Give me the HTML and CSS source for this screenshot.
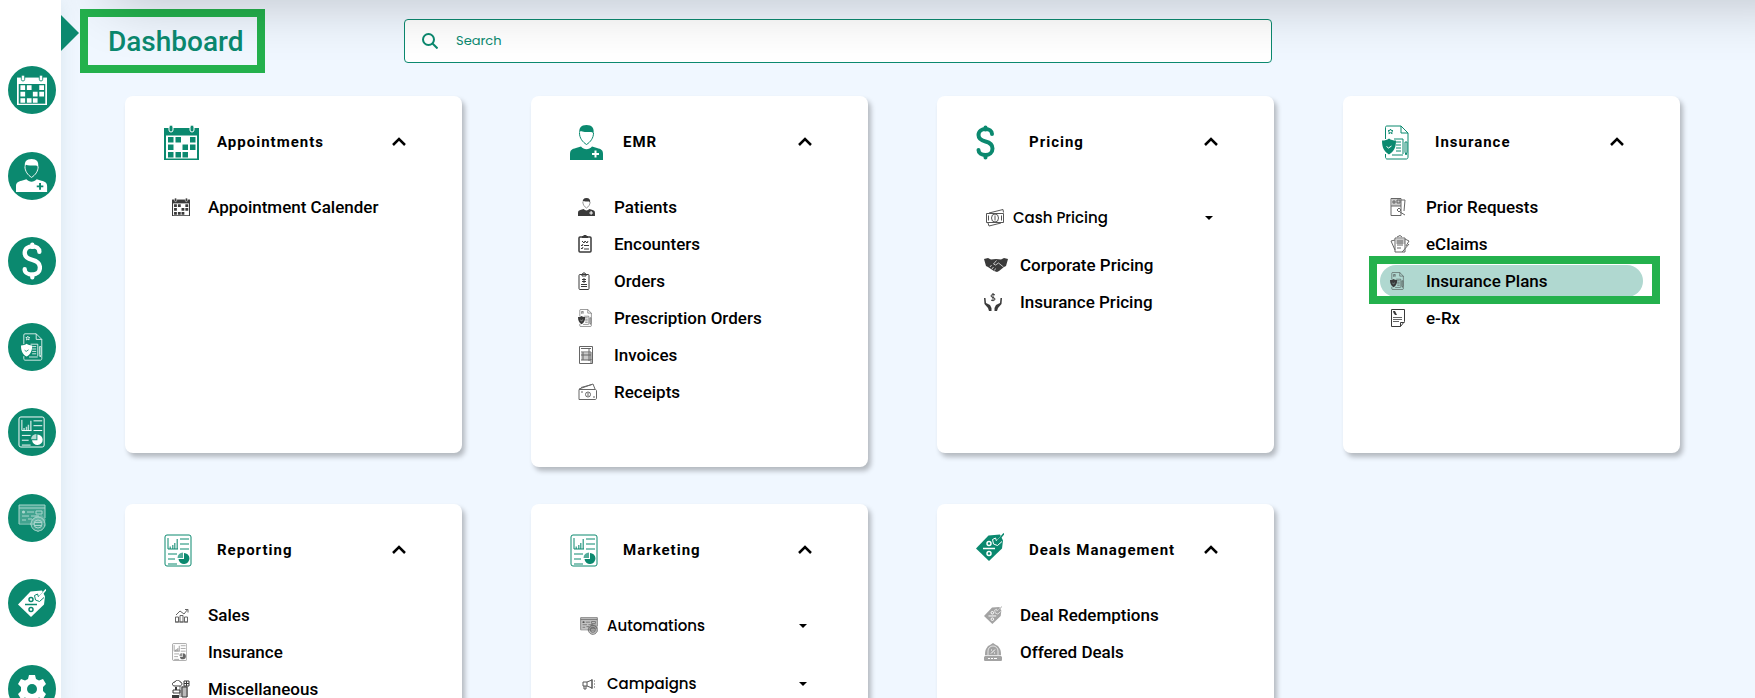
FILE: index.html
```
<!DOCTYPE html>
<html lang="en">
<head>
  <meta charset="UTF-8">
  <title>Dashboard</title>
  <link rel="stylesheet" href="styles.css">
</head>
<body>

  <!-- Icon shapes, reused below -->
  <svg class="icon-defs" aria-hidden="true">
    <defs>
      <g id="calendar">
        <path class="f" d="M0 3h35v32H0z"/>
        <path class="cut" d="M2 10.500h31V33.500H2z"/>
        <path class="f" d="M4 12h5.500v5.500H4zM11.500 12H17v5.500h-5.500zM26 12h5.500v5.500H26zM4 19.500h5.500V25H4zM18.500 19.500H24V25h-5.500zM26 19.500h5.500V25H26zM4 27h5.500v5.500H4zM11.500 27H17v5.500h-5.500zM18.500 27H24v5.500h-5.500z"/>
        <rect class="f ring" x="5" y="0" width="4" height="7" rx="2"/>
        <rect class="f ring" x="26" y="0" width="4" height="7" rx="2"/>
      </g>
      <g id="doctor">
        <path class="f" d="M9.500 9C8.500 3 11 0 16.500 0S24.500 3 23.500 9c-1-2-2-2-3-2-4 0-8 0-10-1z"/>
        <path class="s" d="M9.500 8c0 5 3 9 7 11.500C20.500 17 23.500 13 23.500 8"/>
        <path class="f" d="M0 35v-6c0-4 2-5 6-6l5-1.500c3 3.500 8 3.500 11 0l5 1.500c4 1 6 2 6 6v6z"/>
        <path class="cut" d="M24.500 25.500h2V28H29v2h-2.500v2.500h-2V30H22v-2h2.500z"/>
      </g>
      <g id="dollar">
        <path class="s heavy" d="M16 9c0-3-3-5-6.500-5S2.500 6 2.500 10s3 5.500 7 6.500 7 3 7 7-3 6.500-7 6.500-7-2-7-5"/>
        <path class="s heavy" d="M9.500 2.500v2M9.500 30v2.500"/>
      </g>
      <g id="policy">
        <path class="s" d="M3.500 14V2.500c0-1 .5-1.500 1.500-1.500h14l7 7v24c0 1-.5 2-1.500 2H5c-1 0-1.500-1-1.500-2v-3M19 1v7h7"/>
        <path class="s" d="M8.500 4l.7 1.500 1.800.2-1.300 1.200.4 1.800-1.600-1-1.600 1 .4-1.800L6 5.700l1.800-.2z"/>
        <path class="s" d="M12 14h9v15M14 17h5M14 20h5M14 23h5M14 26h5M10 30h11M23 17v10l1 3 1-3V17z"/>
        <path class="f" d="M7 13.500c2 1.500 4 2 7 2 0 7-2 11-7 14-5-3-7-7-7-14 3 0 5-.5 7-2z"/>
        <path class="cs" d="M4.500 21.500l2 1.500 3-2"/>
      </g>
      <g id="report">
        <rect class="s" x="1" y="1" width="26" height="31" rx="2"/>
        <path class="s" d="M4 4v11h10"/>
        <path class="f shade" d="M5.500 12.500h1.500V15H5.500zM8 11h1.500v4H8zM10 9h1.500v6H10zM12.500 5h1.500v10h-1.500z"/>
        <path class="s" d="M16 5h9M16 10h9M16 15h9M4 20h9M4 25h7M4 30h9"/>
        <path class="f" d="M20 19a5.500 5.500 0 11-5.500 6H20z"/>
        <path class="f shade" d="M19 18.500V24h-5.500a5.500 5.500 0 015.500-5.500z"/>
      </g>
      <g id="automation">
        <path class="tint" d="M1 1h26v18H1z"/>
        <path class="s" d="M17 20H1V1h26v13M1 4h26"/>
        <path class="s" d="M4 8h3M9 8h7M18 7h6v3h-6zM4 12h7M13 12h6M4 16h4M10 15h4"/>
        <circle class="f" cx="5.500" cy="8" r="1.500"/>
        <path class="tint" d="M18 11l3 1 3-1 1 2 3 2-1 4 1 3-3 2-1 3-3-1-4 1-2-3-2-2 1-3-1-3 3-2z"/>
        <circle class="s" cx="20" cy="20" r="7"/>
        <circle class="s" cx="20" cy="20" r="4"/>
        <path class="s" d="M17 18.500h6M17 21.500h6M20 11v2M20 27v1M12 20h1"/>
      </g>
      <g id="tag">
        <path class="f" d="M0 15.500L12.500 2.500 24 1.500l3 6-1 8L13 28z"/>
        <path class="cs bold" d="M7 15.500h12"/>
        <circle class="cs bold" cx="13" cy="10.500" r="2"/>
        <circle class="cs bold" cx="13" cy="20.500" r="2"/>
        <path class="cs" d="M16.500 6.500l1 4.500 4 1.500L26 8.500M16.500 6.500L19.500 5l1 3L26.500 1.500"/>
        <path class="s bold" d="M20.500 9L28 .5"/>
      </g>
      <g id="gear">
        <path class="f" d="M11 0h6l1 4 3 1.500L25 4l3 5-3 3v4l3 3-3 5-4-1.500L18 24l-1 4h-6l-1-4-3-1.500L3 24l-3-5 3-3v-4L0 9l3-5 4 1.500L10 4z"/>
        <circle class="cut" cx="14" cy="14" r="5"/>
      </g>
      <g id="encounter">
        <rect class="s bold" x="1" y="2" width="12" height="15" rx="1"/>
        <path class="f" d="M4 1h1l1-1h2l1 1h1v2H4z"/>
        <path class="s" d="M4 6l2 2 1-2 2 2 1-2M3 10l1 1 1-2M6 10.500h5M3 13l1 1 1-2M6 14h5"/>
      </g>
      <g id="order">
        <rect class="s" x="1" y="2.500" width="10" height="15" rx="1"/>
        <path class="s" d="M4 3l1-2h2l1 2v1H4zM6 6v5M4 7.500h4M4 9.500h4M3 12.500h6M3 14.500h6"/>
      </g>
      <g id="invoice">
        <path class="s" d="M1.500.5h13v17h-13zM3 2.500h10M3 6h10v8H3M3 9h10M5 6v8M11 3v12M13 13v4"/>
        <path class="tint" d="M3 7h10v7H3z"/>
      </g>
      <g id="receipt">
        <path class="s" d="M1 6.500h16c1 0 1.500.5 1.500 1V15c0 1-.5 1.500-1.500 1.500H1zM1 6l14-5 2 5M3 4.500l11-3"/>
        <circle class="s" cx="10" cy="11.500" r="2.500"/>
        <path class="s" d="M10 10v3M3 9h2M15 14h2"/>
      </g>
      <g id="cash">
        <path class="s" d="M.5 4.500h17v9H.5zM3 4L17 .5l.5 3M2 14l1 3 12-3"/>
        <ellipse class="s" cx="9" cy="9" rx="3.500" ry="4"/>
        <path class="s" d="M9 6.500v5M2.500 6.500v5M15.500 6.500v5"/>
      </g>
      <g id="handshake">
        <path class="f" d="M0 1l4-1 3 1.500L12 1l5 .5L20 0l4 1-2 7-2 1-5 4-2 1-3-1L4 9 2 8z"/>
        <path class="cs thin" d="M12.500 2.500L9.500 6l2 1 3-2 5 4M6 9l1.500-2M8 11l1.500-2M10.500 12.500l1-2"/>
      </g>
      <g id="hands">
        <path class="f" d="M0 5h1.500L2 10l4 2 1.500 3v3H5L4 15 .5 11zM18 5h-1.500L16 10l-4 2-1.500 3v3H13l1-3 3.500-4z"/>
        <path class="s" d="M11 2c-1-1-4-1-4 1s4 1 4 3-3 2-4 1M9 0v8"/>
      </g>
      <g id="prior">
        <path class="s" d="M1 .5h10v17H1zM11 2h4l-1 11M1 8h10M3 3h2v2H3zM7 2h3v3H7zM7 12l2-2 2 2-2 2zM10 14l5 3"/>
        <path class="tint" d="M2 1h9v7H2z"/>
      </g>
      <g id="claims">
        <path class="s" d="M5 3h10v14H5zM5 5L1 6l4 9M15 4l4 2-3 5M7 2l3-1.500L12 2M7 6h6M7 8h6M7 10h6M7 13h4M19 9l-6 7-1 1"/>
        <path class="tint" d="M6 4h9v5H6z"/>
      </g>
      <g id="rx">
        <path class="s" d="M.5.5h13v12l-4 5h-9zM9.500 17.500v-4h4"/>
        <path class="f" d="M2 2h2l2 4H4L2.500 4z"/>
        <path class="s soft" d="M2 8.500h9M2 10.500h9M2 12.500h6"/>
      </g>
      <g id="sales">
        <path class="s" d="M.5 13V8h3v5zM5 13V6.500h3V13zM9.500 13V8h3v5zM0 13h13M1 6l4-4 4 3 4-5M10 .5h3v3"/>
      </g>
      <g id="misc">
        <path class="s" d="M3 6C-1 6 0 2 3 2c1-3 5-2 5 0 3 0 2 4 0 4zM10 7h5v10h-5zM12 1h5v5h-5zM14.500 1v5M12 3.500h5M1 10h7v3H1z"/>
        <path class="tint" d="M7 6h9v11H7z"/>
        <path class="f" d="M0 15h7v3H0zM3 7h2v3H3z"/>
      </g>
      <g id="campaign">
        <path class="s" d="M1 4h4l5-2v8L5 8H1zM2 8v3h2V8M5 4v4M10 1v10M12 3h1M12 6h1M12 9h1"/>
      </g>
      <g id="offer">
        <path class="f" d="M1 18c-1 0-1-1-1-2v-2l1-1c0-3 0-5 1-7l2-3 2-1 3-2 3 2 2 1 2 3c1 2 1 4 1 7l1 1v2c0 1 0 2-1 2z"/>
        <path class="cs thin" d="M4 12V8a5 5 0 0110 0v4M1 12.500h16"/>
        <path class="cs" d="M7 10.500l4-4M7 7h1M10 10h1M4 15.500h2M7 15.500h2M10 15.500h3"/>
      </g>
    </defs>
  </svg>

  <nav class="sidebar" aria-label="Main">
    <a class="nav-link" href="#appointments" aria-label="Appointments"><svg class="nav-calendar" viewBox="0 0 35 35"><use href="#calendar"/></svg></a>
    <a class="nav-link" href="#emr" aria-label="EMR"><svg class="nav-doctor" viewBox="0 0 33 35"><use href="#doctor"/></svg></a>
    <a class="nav-link" href="#pricing" aria-label="Pricing"><svg class="nav-dollar" viewBox="0 0 19 35"><use href="#dollar"/></svg></a>
    <a class="nav-link" href="#insurance" aria-label="Insurance"><svg viewBox="0 0 27 35"><use href="#policy"/></svg></a>
    <a class="nav-link" href="#reporting" aria-label="Reporting"><svg class="nav-report" viewBox="0 0 28 33"><use href="#report"/></svg></a>
    <a class="nav-link" href="#marketing" aria-label="Marketing"><svg class="nav-faint" viewBox="0 0 28 28"><use href="#automation"/></svg></a>
    <a class="nav-link" href="#deals" aria-label="Deals Management"><svg viewBox="0 0 28 28"><use href="#tag"/></svg></a>
    <a class="nav-link" href="#settings" aria-label="Settings"><svg viewBox="0 0 28 28"><use href="#gear"/></svg></a>
    <button class="sidebar-toggle" aria-label="Expand menu"></button>
  </nav>

  <div class="page">
    <header class="topbar">
      <h1 class="page-title">Dashboard</h1>
      <label class="search">
        <svg viewBox="0 0 16 16" aria-hidden="true"><circle cx="6.500" cy="6.500" r="5.500"/><path d="M10.500 10.500L15.500 15.500"/></svg>
        <input type="search" placeholder="Search" aria-label="Search">
      </label>
    </header>

    <main class="cards">
      <section class="card" id="appointments">
        <h2><button class="card-header">
          <span class="card-icon"><svg viewBox="0 0 35 35"><use href="#calendar"/></svg></span>
          <span class="card-title">Appointments</span>
          <svg class="chevron" viewBox="0 0 14 9"><path d="M1 8l6-6 6 6"/></svg>
        </button></h2>
        <ul class="menu">
          <li><a class="menu-item" href="#"><span class="menu-icon"><svg viewBox="0 0 35 35"><use href="#calendar"/></svg></span>Appointment Calender</a></li>
        </ul>
      </section>

      <section class="card" id="emr">
        <h2><button class="card-header">
          <span class="card-icon"><svg viewBox="0 0 33 35"><use href="#doctor"/></svg></span>
          <span class="card-title">EMR</span>
          <svg class="chevron" viewBox="0 0 14 9"><path d="M1 8l6-6 6 6"/></svg>
        </button></h2>
        <ul class="menu">
          <li><a class="menu-item" href="#"><span class="menu-icon"><svg viewBox="0 0 33 35"><use href="#doctor"/></svg></span>Patients</a></li>
          <li><a class="menu-item" href="#"><span class="menu-icon"><svg viewBox="0 0 14 18"><use href="#encounter"/></svg></span>Encounters</a></li>
          <li><a class="menu-item" href="#"><span class="menu-icon"><svg viewBox="0 0 12 18"><use href="#order"/></svg></span>Orders</a></li>
          <li><a class="menu-item" href="#"><span class="menu-icon"><svg viewBox="0 0 27 35"><use href="#policy"/></svg></span>Prescription Orders</a></li>
          <li><a class="menu-item" href="#"><span class="menu-icon soft"><svg viewBox="0 0 16 18"><use href="#invoice"/></svg></span>Invoices</a></li>
          <li><a class="menu-item" href="#"><span class="menu-icon soft"><svg viewBox="0 0 19 18"><use href="#receipt"/></svg></span>Receipts</a></li>
        </ul>
      </section>

      <section class="card" id="pricing">
        <h2><button class="card-header">
          <span class="card-icon"><svg viewBox="0 0 19 35"><use href="#dollar"/></svg></span>
          <span class="card-title">Pricing</span>
          <svg class="chevron" viewBox="0 0 14 9"><path d="M1 8l6-6 6 6"/></svg>
        </button></h2>
        <ul class="menu">
          <li><button class="submenu"><span class="submenu-icon"><svg viewBox="0 0 18 18"><use href="#cash"/></svg></span>Cash Pricing<span class="caret"></span></button></li>
          <li><a class="menu-item" href="#"><span class="menu-icon"><svg class="icon-wide" viewBox="0 0 24 14"><use href="#handshake"/></svg></span>Corporate Pricing</a></li>
          <li><a class="menu-item" href="#"><span class="menu-icon"><svg viewBox="0 0 18 18"><use href="#hands"/></svg></span>Insurance Pricing</a></li>
        </ul>
      </section>

      <section class="card" id="insurance">
        <h2><button class="card-header">
          <span class="card-icon"><svg viewBox="0 0 27 35"><use href="#policy"/></svg></span>
          <span class="card-title">Insurance</span>
          <svg class="chevron" viewBox="0 0 14 9"><path d="M1 8l6-6 6 6"/></svg>
        </button></h2>
        <ul class="menu">
          <li><a class="menu-item" href="#"><span class="menu-icon soft"><svg viewBox="0 0 16 18"><use href="#prior"/></svg></span>Prior Requests</a></li>
          <li><a class="menu-item" href="#"><span class="menu-icon soft"><svg viewBox="0 0 20 18"><use href="#claims"/></svg></span>eClaims</a></li>
          <li class="highlight"><a class="menu-item active" href="#"><span class="menu-icon"><svg viewBox="0 0 27 35"><use href="#policy"/></svg></span>Insurance Plans</a></li>
          <li><a class="menu-item" href="#"><span class="menu-icon"><svg viewBox="-1 0 15 18"><use href="#rx"/></svg></span>e-Rx</a></li>
        </ul>
      </section>

      <section class="card" id="reporting">
        <h2><button class="card-header">
          <span class="card-icon"><svg viewBox="0 0 28 35"><use href="#report" y="1"/></svg></span>
          <span class="card-title">Reporting</span>
          <svg class="chevron" viewBox="0 0 14 9"><path d="M1 8l6-6 6 6"/></svg>
        </button></h2>
        <ul class="menu">
          <li><a class="menu-item" href="#"><span class="menu-icon soft"><svg viewBox="-3 -3 18 18"><use href="#sales"/></svg></span>Sales</a></li>
          <li><a class="menu-item" href="#"><span class="menu-icon soft"><svg viewBox="0 0 28 33"><use href="#report"/></svg></span>Insurance</a></li>
          <li><a class="menu-item" href="#"><span class="menu-icon"><svg viewBox="0 0 18 18"><use href="#misc"/></svg></span>Miscellaneous</a></li>
        </ul>
      </section>

      <section class="card" id="marketing">
        <h2><button class="card-header">
          <span class="card-icon"><svg viewBox="0 0 28 35"><use href="#report" y="1"/></svg></span>
          <span class="card-title">Marketing</span>
          <svg class="chevron" viewBox="0 0 14 9"><path d="M1 8l6-6 6 6"/></svg>
        </button></h2>
        <ul class="menu">
          <li><button class="submenu"><span class="submenu-icon"><svg viewBox="0 0 28 28"><use href="#automation"/></svg></span>Automations<span class="caret"></span></button></li>
          <li><button class="submenu"><span class="submenu-icon"><svg viewBox="-2 -3 18 18"><use href="#campaign"/></svg></span>Campaigns<span class="caret"></span></button></li>
        </ul>
      </section>

      <section class="card" id="deals">
        <h2><button class="card-header">
          <span class="card-icon"><svg viewBox="0 0 28 35"><use href="#tag"/></svg></span>
          <span class="card-title">Deals Management</span>
          <svg class="chevron" viewBox="0 0 14 9"><path d="M1 8l6-6 6 6"/></svg>
        </button></h2>
        <ul class="menu">
          <li><a class="menu-item" href="#"><span class="menu-icon pale"><svg viewBox="0 0 28 28"><use href="#tag"/></svg></span>Deal Redemptions</a></li>
          <li><a class="menu-item" href="#"><span class="menu-icon pale"><svg viewBox="0 0 18 18"><use href="#offer"/></svg></span>Offered Deals</a></li>
        </ul>
      </section>
    </main>
  </div>

</body>
</html>
```
FILE: styles.css
```
* {
  box-sizing: border-box;
}
body {
  --green: #0b896f;
  --cut: #fff;
  margin: 0;
  display: flex;
  height: 100vh;
  overflow: hidden;
  background-color: #f0f7ff;
  color: #000;
  font-family: Roboto, sans-serif;
}
button {
  padding: 0;
  border: none;
  background: none;
  color: inherit;
  font: inherit;
  text-align: left;
  cursor: pointer;
}
a {
  color: inherit;
  text-decoration: none;
}
h1, h2, ul {
  margin: 0;
  padding: 0;
  list-style: none;
}

/* Icon parts */
.icon-defs {
  position: absolute;
  width: 0;
  height: 0;
}
.f {
  fill: currentColor;
}
.s {
  fill: none;
  stroke: currentColor;
  stroke-linejoin: round;
}
.cut {
  fill: var(--cut);
}
.cs {
  fill: none;
  stroke: var(--cut);
}
.tint {
  fill: currentColor;
  opacity: 0.35;
}
.shade {
  opacity: 0.7;
}
.ring {
  stroke: var(--cut);
}
.thin {
  stroke-width: 0.7;
}
.bold {
  stroke-width: 1.5;
}
.heavy {
  stroke-width: 4;
  stroke-linecap: round;
}

/* Sidebar */
.sidebar {
  position: relative;
  z-index: 2;
  flex: none;
  display: flex;
  flex-direction: column;
  justify-content: space-between;
  align-items: center;
  width: 61px;
  height: calc(100vh + 15px);
  padding: 66px 5px 0 8px;
  background-color: #fff;
  box-shadow: 0 0 20px rgba(11, 80, 80, 0.1);
}
.nav-link {
  --cut: var(--green);
  flex: none;
  display: flex;
  align-items: center;
  justify-content: center;
  width: 48px;
  height: 48px;
  border-radius: 50%;
  background-color: var(--green);
  color: #fff;
}
.nav-link svg {
  height: 28px;
}
.nav-link .nav-calendar {
  height: 30px;
}
.nav-link .nav-doctor {
  height: 33px;
}
.nav-link .nav-dollar {
  height: 38px;
}
.nav-link .nav-report {
  height: 32px;
}
.nav-faint {
  opacity: 0.65;
}
.sidebar-toggle {
  position: absolute;
  top: 15px;
  left: 100%;
  width: 18px;
  height: 36px;
  background-color: var(--green);
  clip-path: polygon(0 0, 100% 50%, 0 100%);
}

/* Top bar */
.page {
  flex: 1;
  min-width: 0;
}
.topbar {
  position: relative;
  display: grid;
  grid-template-columns: 324px minmax(0, 868px);
  align-items: center;
  padding: 9px 32px 0 19px;
}
.topbar::after {
  content: "";
  position: absolute;
  top: -60px;
  left: 48px;
  right: -60px;
  height: 60px;
  box-shadow: 0 0 60px rgba(0, 0, 0, 0.24);
  pointer-events: none;
}
.page-title {
  justify-self: start;
  height: 64px;
  padding: 0 14px 0 20px;
  border: 8px solid #24b14d;
  color: var(--green);
  font-size: 28px;
  font-weight: 500;
  line-height: 50px;
}
.search {
  display: flex;
  align-items: center;
  gap: 18px;
  height: 44px;
  padding: 0 17px;
  border: 1px solid var(--green);
  border-radius: 4px;
  background-color: #fff;
}
.search svg {
  flex: none;
  width: 16px;
  height: 16px;
  fill: none;
  stroke: var(--green);
  stroke-width: 2;
}
.search input {
  flex: 1;
  padding: 0;
  border: none;
  outline: none;
  background: none;
  font: 13px Poppins, Inter, sans-serif;
}
.search input::placeholder {
  color: var(--green);
}

/* Cards */
.cards {
  display: grid;
  grid-template-columns: repeat(4, minmax(0, 1fr));
  gap: 37px 69px;
  align-items: start;
  padding: 23px 75px 37px 64px;
}
.card {
  min-height: 357px;
  padding: 29px 37px 59px;
  border-radius: 8px;
  background-color: #fff;
  box-shadow: 3px 4px 5px rgba(0, 0, 0, 0.25);
}
.card-header {
  display: flex;
  align-items: center;
  width: 100%;
  height: 35px;
  padding: 0 19px 2px 2px;
}
.card-icon {
  display: flex;
  align-self: flex-start;
  width: 53px;
  color: var(--green);
}
.card-icon svg {
  height: 35px;
}
.card-title {
  flex: 1;
  font-size: 15px;
  font-weight: 700;
  letter-spacing: 1px;
  line-height: 20px;
  white-space: nowrap;
}
.chevron {
  width: 14px;
  fill: none;
  stroke: #000;
  stroke-width: 2.5;
}

/* Card menus */
.menu {
  display: flex;
  flex-direction: column;
  gap: 5px;
  padding-top: 31px;
}
.menu-item {
  display: flex;
  align-items: center;
  height: 32px;
  padding-left: 10px;
  border-radius: 16px;
  font-size: 17px;
  font-weight: 500;
  white-space: nowrap;
}
.menu-icon {
  display: flex;
  flex: none;
  width: 36px;
  color: #3a3a3a;
}
.menu-icon svg,
.submenu-icon svg {
  height: 18px;
}
.menu-icon .icon-wide {
  height: 14px;
}
.soft {
  color: #666;
}
.pale {
  color: #a3a3a3;
}
.active {
  --cut: #b0d8d0;
  background-color: #b0d8d0;
}
.highlight {
  position: relative;
}
.highlight::after {
  content: "";
  position: absolute;
  inset: -9px -17px -7px -11px;
  border: 8px solid #24b14d;
  pointer-events: none;
}
.submenu {
  display: flex;
  align-items: center;
  width: 100%;
  height: 53px;
  padding: 0 24px 0 12px;
  font-family: Poppins, Inter, sans-serif;
  font-size: 15px;
  font-weight: 500;
}
.submenu-icon {
  display: flex;
  width: 27px;
  color: #555;
}
.caret {
  margin-left: auto;
  border: 4px solid transparent;
  border-top-color: #000;
  border-bottom: none;
}
```
